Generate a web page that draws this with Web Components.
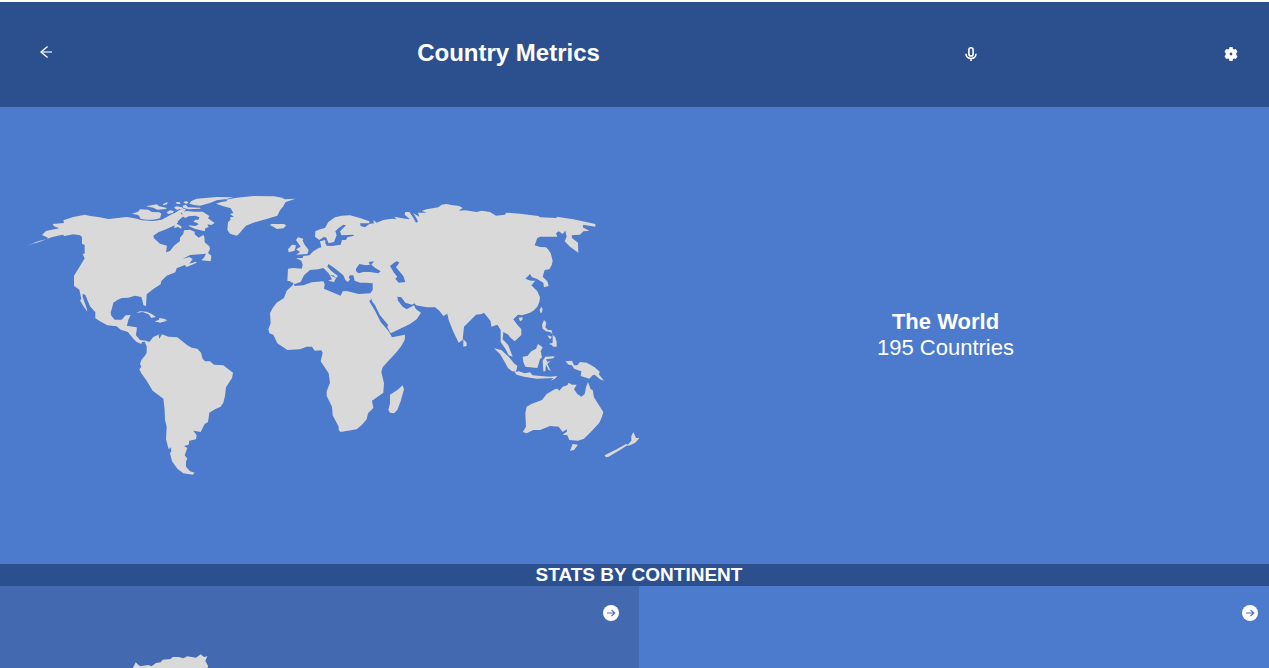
<!DOCTYPE html>
<html lang="en">
<head>
<meta charset="utf-8">
<meta name="viewport" content="width=device-width, initial-scale=1">
<title>Country Metrics</title>
<style>
html{background:#fff;height:100%}
body{margin:0;height:100%;overflow:hidden;font-family:"Liberation Sans",Arial,sans-serif;color:#fff;
--navy:#2c508e;--sea:#4c7acc;--sea-dark:#4369b0;--land:#d9d9d9}
</style>
</head>
<body>
<metrics-app></metrics-app>
<script>
const define = (name, html) => customElements.define(name, class extends HTMLElement {
  constructor() {
    super();
    this.attachShadow({ mode: 'open' }).innerHTML = html;
  }
});

define('app-header', `
<style>
:host{display:block;background:var(--navy)}
header{display:flex;align-items:center;justify-content:space-between;padding:0 40px 2px;min-height:105px;box-sizing:border-box}
h1{margin:0;padding-bottom:2px;font-size:24px;line-height:28px}
.tools{display:flex;justify-content:space-between;flex:0 0 273px}
button{display:block;border:0;padding:0;margin:0;background:none;color:inherit}
svg{display:block}
.back{padding-bottom:4px}
</style>
<header>
<button class="back" aria-label="Back"><svg width="12" height="12" viewBox="0 0 12 12" fill="none" stroke="#fff"><path d="M7.6 .6 1 6 7.6 11.4" stroke-width="1.3"/><path d="M1 6H12" stroke-width="1.4" opacity=".8"/></svg></button>
<h1>Country Metrics</h1>
<div class="tools">
<button aria-label="Voice search"><svg width="12" height="14" viewBox="0 0 12 14" fill="none" stroke="#fff" stroke-width="1.6"><rect x="3.9" y=".8" width="4.2" height="8.2" rx="2.1"/><path d="M1 6.8C1 13 11 13 11 6.8M6 11.3V14"/></svg></button>
<button aria-label="Settings"><svg width="14" height="14" viewBox="0 0 14 14" fill="#fff"><path fill-rule="evenodd" d="M5.5 0h3l.5 2 .8.5 2-.6 1.7 2.8L12.3 6v2l1.2 1.3-1.7 2.8-2-.6-.8.5-.5 2h-3L5 12l-.8-.5-2 .6L.5 9.300 1.700 8V6L.5 4.700 2.200 1.900l2 .6L5 2ZM7 5.600A1.400 1.400 0 1 0 7 8.400 1.400 1.400 0 1 0 7 5.600Z"/></svg></button>
</div>
</header>`);

define('world-map', `
<style>:host{display:block}svg{display:block;width:100%;height:auto;fill:var(--land)}</style>
<svg viewBox="78 585 1839 843" role="img" aria-label="World map">
<g transform="translate(60 555)">
<path d="M18 184 36 177 60 170 80 162 95 157 120 151 132 149 130 154 160 148 180 151 186 156 186 176 194 180 194 205 188 208 194 220 176 250 162 272 162 302 178 314 184 342 180 346 188 360 202 380 200 370 188 336 188 326 196 330 210 364 226 382 226 400 240 409 262 421 290 424 302 434 325 441 332 450 345 455 348 445 350 430 345 427 320 426 325 404 332 390 317 391 305 404 284 404 274 392 272 382 276 370 280 353 292 345 305 339 325 338 345 332 364 336 368 350 370 360 378 364 380 328 400 312 422 298 424 288 440 272 466 262 470 250 494 240 500 246 530 233 528 230 508 236 518 222 508 216 488 222 510 210 550 207 558 206 552 218 544 226 572 229 574 212 564 204 570 192 568 184 554 172 553 156 550 150 536 158 524 148 524 140 510 134 492 136 490 146 480 158 480 168 462 182 450 198 438 202 441 182 420 176 402 160 400 152 415 142 440 132 466 120 474 112 468 104 474 95 470 84 458 86 440 96 425 104 400 108 365 106 350 101 335 98 320 96 300 98 265 102 235 96 210 93 195 89 160 96 130 106 132 114 98 117 102 124 118 130 95 134 78 138 66 150 84 158 80 162 50 170Z"/>
<path d="M348 384 360 379 380 380 394 386 408 396 394 399 386 388 368 381Z M405 410 416 406 418 399 432 401 442 406 430 408 422 411Z"/>
</g>
<g transform="translate(360 555)">
<path d="M36 86 54 80 60 73 84 74 96 81 118 82 124 86 120 100 100 104 80 104 62 102 58 94 54 90Z M78 64 110 58 118 64 138 68 140 72 112 74 100 68Z M128 58 142 51 142 57 132 61Z M140 82 150 76 162 78 158 84 144 87Z M162 68 168 64 186 67 192 73 178 72 172 75Z M166 52 178 51 182 57 172 57Z M188 62 198 59 204 67 240 68 242 71 206 73 190 69Z M190 51 200 48 206 54 196 56Z M208 56 214 48 230 41 290 36 340 37 320 42 290 46 270 54 240 62 222 60Z"/>
<path d="M152 92 164 84 182 73 198 72 192 80 182 84 190 94 174 108 170 116 184 124 184 131 174 126 162 129 164 122Z M186 82 200 78 222 80 248 80 268 93 264 100 284 114 274 120 262 118 266 126 256 130 254 139 236 134 226 132 208 124 206 121 226 123 236 118 232 114 220 110 226 104 236 104 238 97 226 92 206 94 196 99 188 94Z"/>
<path d="M288 56 304 51 322 48 318 44 350 38 400 33 462 34 486 38 494 43 526 41 496 52 490 64 480 76 472 92 440 102 400 113 378 122 366 136 356 148 350 152 330 146 322 134 324 112 332 104 330 97 342 96 330 87 340 84 332 70 310 64Z M450 120 460 116 466 120 492 118 498 122 490 130 470 131Z"/>
</g>
<g transform="translate(300 960)">
<path d="M20 12H45L60 24 84 36 100 56 110 66 124 72 126 66 134 65 140 78 140 98 134 108 124 120 120 132 124 140 118 148 124 160 140 182 158 212 190 236 194 270 195 300 200 320 198 358 206 388 212 382 214 394 210 400 216 424 232 446 250 460 278 464 284 458 270 454 258 440 258 424 262 416 254 406 262 384 252 378 266 374 268 362 288 358 290 346 280 332 302 336 314 312 324 306 328 278 345 268 362 260 370 248 375 228 378 202 396 174 399 158 370 136 342 134 330 124 315 124 308 116 303 98 292 86 275 83 262 76 232 52 205 50 186 43 178 56 176 46 180 42 160 51 148 66 138 62 120 60 108 46 110 22 84 18 60 15Z M164 4 178 0 202 2 180 8Z"/>
</g>
<g transform="translate(780 570)">
<path fill-rule="evenodd" d="M84 236 100 234 125 236 128 224 124 212 108 205 128 204 130 198 148 196 160 184 176 174 184 172 180 154 196 150 196 160 200 167 216 168 242 164 246 150 258 150 262 142 282 137 280 134 244 136 240 124 258 106 250 104 236 114 226 124 230 136 222 156 206 160 198 142 190 142 178 150 165 140 166 124 180 118 195 114 205 96 225 82 245 77 270 76 300 84 328 94 328 100 300 100 302 108 315 112 328 102 342 100 340 90 350 98 370 90 395 86 410 88 402 80 436 86 450 88 434 74 436 66 448 66 458 80 468 98 474 95 470 86 460 70 478 80 474 68 500 68 485 62 500 58 535 52 545 44 560 42 574 45 598 48 608 54 596 62 616 61 650 66 665 62 690 66 708 77 735 74 738 68 780 71 835 78 840 82 890 84 890 80 940 88 1006 102 1006 110 970 104 968 112 988 122 970 124 960 134 935 136 936 144 954 158 955 188 930 170 914 154 920 140 916 122 908 132 896 124 888 130 892 140 840 140 832 144 824 166 840 171 858 172 866 180 872 190 878 212 875 226 868 238 854 240 848 260 862 274 866 288 852 292 850 278 830 266 816 262 810 252 796 266 812 272 826 272 814 286 832 304 840 322 838 336 832 350 822 361 810 368 786 376 774 374 760 388 772 404 784 418 784 435 764 454 750 442 745 434 730 426 728 448 745 466 758 500 746 496 736 476 722 456 722 420 712 404 694 410 692 394 672 368 665 372 648 374 612 410 608 450 596 458 580 425 566 390 562 371 550 378 538 362 525 352 500 352 468 346 464 340 456 344 436 338 424 322 412 320 414 332 428 350 440 358 462 346 468 358 483 368 470 388 450 402 430 412 392 430 382 412 384 404 360 376 345 346 336 334 330 311 338 300 338 280 318 278 300 278 284 272 280 256 270 256 266 262 270 268 264 276 256 270 250 256 238 246 220 232 205 222 202 230 215 244 234 258 228 264 220 256 210 256 228 264 222 276 204 272 216 268 206 250 190 234 174 238 150 240 132 256 122 276 104 282 90 274 82 272Z
M288 236 298 222 318 226 330 224 326 216 342 214 334 224 346 234 362 244 355 250 330 246 310 246 296 250 288 244Z M390 228 405 216 412 214 418 218 408 232 418 244 430 258 436 276 416 278 406 266 412 260 402 248Z"/>
<path d="M108 150 114 142 130 146 128 152 134 164 146 180 142 192 108 194 120 186 108 178 122 170Z M84 178 96 164 108 166 104 182 86 187Z M30 102 70 102 78 105 70 114 50 116 44 110Z"/>
<path d="M100 278 104 288 130 286 155 277 190 274 194 282 192 296 215 306 242 317 248 304 260 303 296 312 332 310 338 322 328 334 345 362 362 396 386 424 396 442 435 434 434 450 424 468 410 486 380 518 368 532 364 546 372 580 370 608 336 632 340 654 324 670 320 688 306 704 290 718 242 726 236 720 236 710 218 676 216 650 200 618 200 604 210 578 206 550 182 514 188 488 184 481 164 482 156 470 140 470 120 478 82 480 52 460 40 434 28 430 25 418 32 400 30 370 38 354 50 338 72 324 80 302 98 286Z M428 586 432 598 422 634 412 660 402 670 390 668 385 660 390 640 390 614 412 600Z"/>
</g>
<g transform="translate(1320 930)">
<path d="M299 0 304-10 308-2 305 8 301 8Z M236 23 248 22 247 30 240 34Z M70 88 80 98 80 108 70 110Z M312 30 319 38 316 52 324 60 334 60 338 72 330 66 318 64 308 56 306 44Z M322 76 336 80 330 88Z M338 74 346 82 350 96 350 110 340 110 334 104 326 102 338 98Z"/>
<path d="M162 115 184 120 206 140 222 160 232 168 228 185 216 184 204 174 192 152 180 132Z M224 187 236 184 254 190 270 187 278 196 300 198 330 200 352 198 345 206 332 212 340 204 290 206 252 200 230 194Z M248 140 262 138 274 124 288 116 294 102 308 112 302 124 306 142 300 148 292 174 256 170 250 156Z M308 152 316 140 344 139 340 145 318 148 322 156 332 152 322 162 332 182 326 180 318 164 316 184 310 184Z M376 154 396 152 402 166 412 166 420 156 440 158 464 172 480 186 476 192 492 212 480 208 464 194 458 196 448 206 422 198 424 184 402 176 396 166 386 164Z"/>
<path d="M260 290 274 282 306 270 320 252 344 238 352 236 358 242 368 230 382 226 386 218 396 224 410 224 402 238 412 252 424 260 434 252 438 232 444 216 452 238 458 240 462 262 476 284 490 306 486 320 478 338 456 362 432 386 414 392 388 390 382 376 380 358 368 366 356 350 330 348 300 360 280 360 260 370 248 366 258 350 256 310Z M398 402 414 404 402 420 390 422Z M368 374 382 364 382 376Z M494 436 530 418 558 402 564 404 546 416 506 440 498 442Z M560 408 574 392 574 378 580 366 588 384 598 384 586 398 570 406Z"/>
</g>
</svg>`);

define('world-summary', `
<style>
:host{display:block}
section{display:grid;grid-template-columns:1fr 1fr;align-items:center;padding:88px 26px;background:var(--sea)}
.text{padding-bottom:2px;text-align:center;font-size:22px;line-height:26px}
h2,p{margin:0;font-size:inherit}
</style>
<section>
<world-map></world-map>
<div class="text"><h2><slot name="name"></slot></h2><p><slot name="count"></slot></p></div>
</section>`);

define('section-title', `
<style>:host{display:block;background:var(--navy)}h2{margin:0;font-size:19px;line-height:22px;text-align:center}</style>
<h2><slot></slot></h2>`);

define('continent-card', `
<style>
:host{display:flex;flex-direction:column;overflow:hidden;background:var(--card,var(--sea))}
.top{display:flex;justify-content:flex-end;padding:19px 20px 0}
a{display:block;border-radius:50%}
svg{display:block}
::slotted(svg){display:block;flex:none;fill:var(--land);margin:33px 0 0 132px}
</style>
<div class="top"><a href="#details" aria-label="View continent"><svg width="16" height="16" viewBox="0 0 16 16"><circle cx="8" cy="8" r="8" fill="#fff"/><path d="M4 8H11.500M8.500 4.800 11.700 8 8.500 11.200" fill="none" stroke="#4c70b5" stroke-width="1.200"/></svg></a></div>
<slot></slot>`);

define('metrics-app', `
<style>
:host{display:flex;flex-direction:column;height:100%;width:calc(100% + 9px);padding-top:2px;box-sizing:border-box}
app-header,world-summary,section-title{flex:none}
.cards{flex:1;min-height:0;display:grid;grid-template-columns:1fr 1fr}
.first{--card:var(--sea-dark)}
</style>
<app-header></app-header>
<world-summary><span slot="name">The World</span><span slot="count">195 Countries</span></world-summary>
<section-title>STATS BY CONTINENT</section-title>
<div class="cards">
<continent-card class="first"><svg width="78" height="78" viewBox="96 297 234 234" aria-hidden="true"><path d="M98 339 102 332 107 322 120 334 145 330 155 334 168 324 182 322 188 314 212 312 218 306 236 306 250 310 262 304 288 308 302 298 312 306 322 304 316 318 324 332 322 345 320 440 250 520 170 500 100 400Z"/></svg></continent-card>
<continent-card></continent-card>
</div>`);
</script>
</body>
</html>
